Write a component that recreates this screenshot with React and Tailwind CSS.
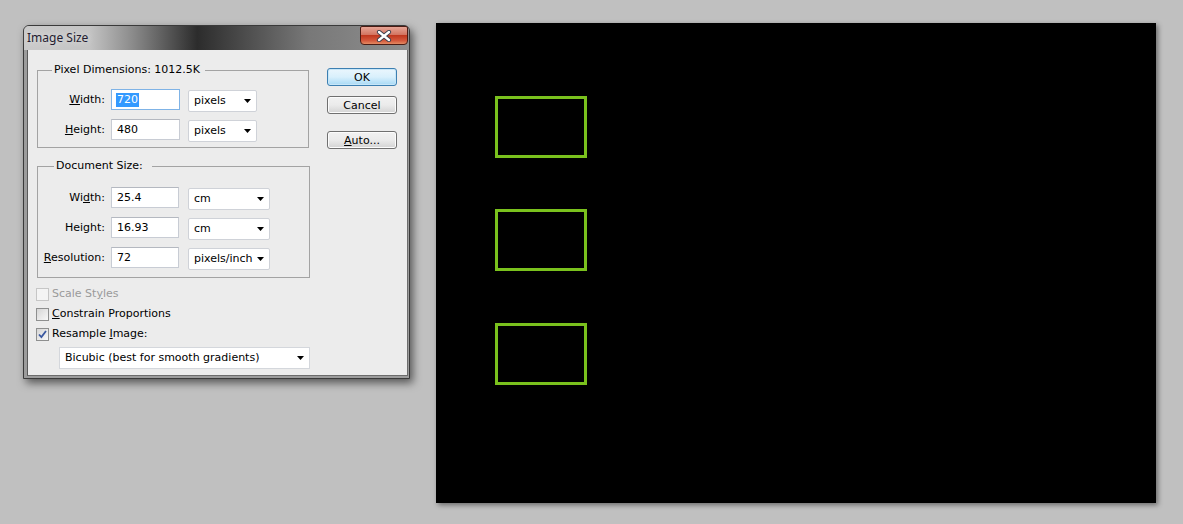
import React from 'react'

const FONT = { fontFamily: '"DejaVu Sans", Tahoma, sans-serif' }

const Arrow = () => (
  <svg width="7" height="4" viewBox="0 0 7 4" className="shrink-0">
    <path d="M0 0h7L3.5 4z" fill="#000" />
  </svg>
)

const Select = ({ value, w }) => (
  <div className={`${w} h-[22px] mt-px bg-white border border-[#cfd2d8] rounded-[2px] flex items-center pl-[5px] pr-[5px]`}>
    <span className="flex-1 text-black">{value}</span>
    <Arrow />
  </div>
)

const Input = ({ value, w, focused }) => (
  <div
    className={`${w} h-[21px] bg-white border flex items-center pl-[4px] ${
      focused ? 'border-[#7fb3e6]' : 'border-[#c8ccd4] border-t-[#b4b8c0]'
    }`}
  >
    {focused ? <span className="bg-[#3399ff] text-white px-px">{value}</span> : <span className="px-px">{value}</span>}
  </div>
)

const Row = ({ label, value, unit, inputW, selW, gap, focused }) => (
  <div className="flex items-start">
    <div className="w-[67px] h-[21px] flex items-center justify-end text-black">{label}</div>
    <div className="ml-[6px]">
      <Input value={value} w={inputW} focused={focused} />
    </div>
    <div className={gap}>
      <Select value={unit} w={selW} />
    </div>
  </div>
)

const Group = ({ legend, legendLeft, className, children }) => (
  <div className={`relative border border-[#a3a3a3] ${className}`}>
    <span className={`absolute top-[-8px] ${legendLeft} bg-[#ececec] leading-[14px] text-black whitespace-pre`}>
      {legend}
    </span>
    {children}
  </div>
)

const Checkbox = ({ checked, disabled }) => (
  <div
    className={`w-[13px] h-[13px] border flex items-center justify-center ${
      disabled
        ? 'border-[#c6c6c6] bg-[#f4f4f4]'
        : 'border-[#8e8f8f] bg-gradient-to-br from-[#d6d6d6] to-[#f8f8f8]'
    }`}
  >
    {checked && (
      <svg width="9" height="9" viewBox="0 0 9 9">
        <path d="M1 4.5l2.4 2.6L8 1" fill="none" stroke="#3a58a0" strokeWidth="1.8" />
      </svg>
    )}
  </div>
)

const Button = ({ children, primary, className = '' }) => (
  <div
    className={`w-[70px] h-[18px] rounded-[3px] border flex items-center justify-center text-black leading-none ${
      primary
        ? 'border-[#3c7fb1] bg-gradient-to-b from-[#eaf6fd] via-[#d9f0fc] to-[#a7d9f5] shadow-[inset_0_0_0_1px_#c7e6f8]'
        : 'border-[#707070] bg-gradient-to-b from-[#f2f2f2] via-[#ebebeb] to-[#d3d3d3] shadow-[inset_0_0_0_1px_#fcfcfc]'
    } ${className}`}
  >
    {children}
  </div>
)

const CloseButton = () => (
  <div className="w-[48px] h-[19px] rounded-b-[4px] rounded-t-[2px] border border-[#4b1c14] bg-[linear-gradient(#e6a596_0%,#d37561_45%,#c0381f_50%,#d4583c_80%,#e48a62_100%)] flex items-center justify-center">
    <svg width="16" height="12" viewBox="0 0 16 12">
      <path d="M3 2l10 8M13 2L3 10" stroke="#3a3f4d" strokeWidth="4.2" strokeLinecap="round" />
      <path d="M3 2l10 8M13 2L3 10" stroke="#ffffff" strokeWidth="2.4" strokeLinecap="round" />
    </svg>
  </div>
)

function Dialog() {
  return (
    <div
      className="ml-[23px] mt-[25px] w-[387px] h-[354px] flex flex-col border border-[#3a3a3a] rounded-t-[6px] bg-[#9c9c9c] shadow-[3px_4px_8px_rgba(0,0,0,0.55)]"
      style={FONT}
    >
      <div className="h-[24px] flex items-start rounded-t-[5px] bg-[linear-gradient(90deg,#cacaca_0%,#c4c4c4_17%,#8c8c8c_28%,#2c2c2c_45%,#4e4e4e_58%,#787878_74%,#8f8f8f_100%)]">
        <span
          className="ml-[3px] mt-[5px] text-[12px] leading-[14px] text-[#241c30]"
          style={{ fontFamily: '"Noto Sans", "Liberation Sans", sans-serif', textShadow: '0 0 6px #e8e8e8' }}
        >
          Image Size
        </span>
        <div className="ml-auto mr-px">
          <CloseButton />
        </div>
      </div>
      <div className="flex-1 pl-[3px] pr-px pb-[2px]">
        <div className="h-full bg-[#ececec] border border-t-0 border-[#6c6c6c] border-l-[#5a5a5a] flex pl-[9px] pt-[18px] text-[11px] leading-[14px]">
          <div className="w-[272px] flex flex-col">
            <Group legend="Pixel Dimensions: 1012.5K" legendLeft="left-[14px] pl-[2px] pr-[5px]" className="mt-[2px] h-[78px] w-[272px] pt-[18px]">
              <Row label={<span><u>W</u>idth:</span>} value="720" unit="pixels" inputW="w-[69px]" selW="w-[69px]" gap="ml-[8px]" focused />
              <div className="h-[7px]" />
              <Row label={<span><u>H</u>eight:</span>} value="480" unit="pixels" inputW="w-[69px]" selW="w-[69px]" gap="ml-[8px]" />
            </Group>
            <Group legend="Document Size:" legendLeft="left-[16px] pl-[2px] pr-[9px]" className="mt-[18px] h-[112px] w-[273px] pt-[20px]">
              <Row label={<span>Wi<u>d</u>th:</span>} value="25.4" unit="cm" inputW="w-[68px]" selW="w-[82px]" gap="ml-[9px]" />
              <div className="h-[7px]" />
              <Row label={<span>Hei<u>g</u>ht:</span>} value="16.93" unit="cm" inputW="w-[68px]" selW="w-[82px]" gap="ml-[9px]" />
              <div className="h-[7px]" />
              <Row label={<span><u>R</u>esolution:</span>} value="72" unit="pixels/inch" inputW="w-[68px]" selW="w-[82px]" gap="ml-[9px]" />
            </Group>
            <div className="mt-[6px] ml-[-1px] flex flex-col">
              <div className="h-[20px] flex items-center">
                <Checkbox disabled />
                <span className="ml-[3px] text-[#9a9a9a]">Scale St<u>y</u>les</span>
              </div>
              <div className="h-[20px] flex items-center">
                <Checkbox />
                <span className="ml-[3px] text-black"><u>C</u>onstrain Proportions</span>
              </div>
              <div className="h-[20px] flex items-center">
                <Checkbox checked />
                <span className="ml-[3px] text-black">Resample <u>I</u>mage:</span>
              </div>
            </div>
            <div className="mt-[3px] ml-[22px] w-[251px] h-[22px] bg-white border border-[#d4d7dc] flex items-center pl-[5px] pr-[5px]">
              <span className="flex-1 text-black">Bicubic (best for smooth gradients)</span>
              <Arrow />
            </div>
          </div>
          <div className="ml-[18px] flex flex-col">
            <Button primary>OK</Button>
            <Button className="mt-[10px]">Cancel</Button>
            <Button className="mt-[17px]">
              <span><u>A</u>uto...</span>
            </Button>
          </div>
        </div>
      </div>
    </div>
  )
}

function Canvas() {
  const box = 'w-[92px] h-[62px] border-[3px] border-[#7ac11d]'
  return (
    <div className="ml-[26px] mt-[23px] w-[720px] h-[480px] bg-black shadow-[2px_2px_5px_rgba(0,0,0,0.45)] flex flex-col pl-[59px] pt-[73px]">
      <div className={box} />
      <div className={`${box} mt-[51px]`} />
      <div className={`${box} mt-[52px]`} />
    </div>
  )
}

export default function App() {
  return (
    <div className="w-[1183px] h-[524px] bg-[#c0c0c0] flex items-start overflow-hidden">
      <Dialog />
      <Canvas />
    </div>
  )
}
